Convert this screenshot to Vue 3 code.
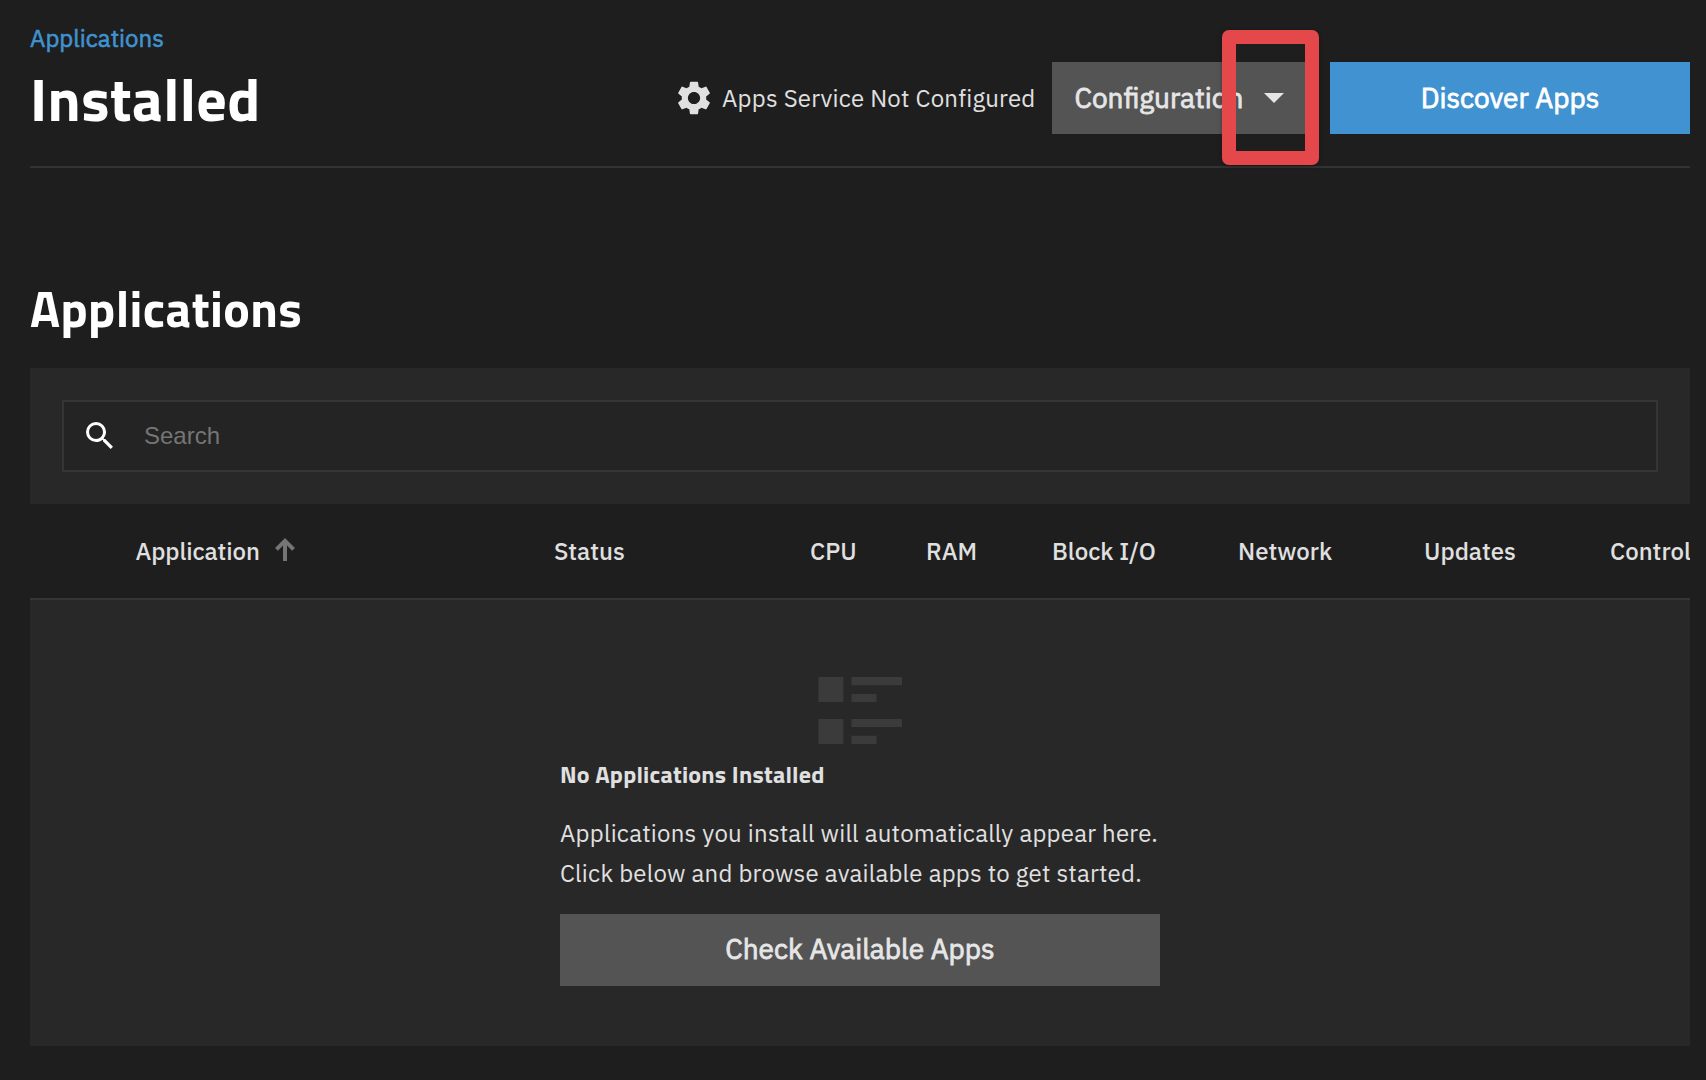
<script setup>
const columns = [
  { label: 'Application', key: 'app', sorted: true },
  { label: 'Status', key: 'status' },
  { label: 'CPU', key: 'cpu' },
  { label: 'RAM', key: 'ram' },
  { label: 'Block I/O', key: 'io' },
  { label: 'Network', key: 'network' },
  { label: 'Updates', key: 'updates' },
  { label: 'Controls', key: 'controls' },
]
</script>

<template>
  <main class="page">
    <header class="page-header">
      <div class="titles">
        <a class="breadcrumb">Applications</a>
        <h1>Installed</h1>
      </div>
      <div class="actions">
        <svg class="gear" viewBox="2 2 20 20" aria-hidden="true">
          <path d="M19.14 12.94c.04-.3.06-.61.06-.94 0-.32-.02-.64-.07-.94l2.03-1.58c.18-.14.23-.41.12-.61l-1.92-3.32c-.12-.22-.37-.29-.59-.22l-2.39.96c-.5-.38-1.03-.7-1.62-.94l-.36-2.54c-.04-.24-.24-.41-.48-.41h-3.84c-.24 0-.43.17-.47.41l-.36 2.54c-.59.24-1.13.57-1.62.94l-2.39-.96c-.22-.08-.47 0-.59.22L2.74 8.87c-.12.21-.08.47.12.61l2.03 1.58c-.05.3-.09.63-.09.94s.02.64.07.94l-2.03 1.58c-.18.14-.23.41-.12.61l1.92 3.32c.12.22.37.29.59.22l2.39-.96c.5.38 1.03.7 1.62.94l.36 2.54c.05.24.24.41.48.41h3.84c.24 0 .44-.17.47-.41l.36-2.54c.59-.24 1.13-.56 1.62-.94l2.39.96c.22.08.47 0 .59-.22l1.92-3.32c.12-.22.07-.47-.12-.61l-2.01-1.58zM12 15.6c-1.98 0-3.6-1.62-3.6-3.6s1.62-3.6 3.6-3.6 3.6 1.62 3.6 3.6-1.62 3.6-3.6 3.6z" />
        </svg>
        <span class="service">Apps Service Not Configured</span>
        <button class="btn config">
          <span>Configuration</span>
          <svg class="caret" viewBox="0 0 20 10" aria-hidden="true"><path d="M0 0h20L10 10z" /></svg>
          <i class="highlight"></i>
        </button>
        <button class="btn primary">Discover Apps</button>
      </div>
    </header>

    <h2>Applications</h2>

    <section class="search-card">
      <label class="search">
        <svg viewBox="3 3 17.5 17.5" aria-hidden="true">
          <path d="M15.5 14h-.79l-.28-.27A6.471 6.471 0 0 0 16 9.5 6.5 6.5 0 1 0 9.5 16c1.61 0 3.09-.59 4.23-1.57l.27.28v.79l5 4.99L20.49 19l-4.99-5zm-6 0C7.01 14 5 11.99 5 9.5S7.01 5 9.5 5 14 7.01 14 9.5 11.99 14 9.5 14z" />
        </svg>
        <span>Search</span>
      </label>
    </section>

    <div class="table-head">
      <div v-for="c in columns" :key="c.key" class="th" :class="c.key">
        {{ c.label }}
        <svg v-if="c.sorted" viewBox="0 0 20 23" aria-hidden="true">
          <path d="M8 23V7.6L2.9 12.7 0 10 10 0l10 10-2.9 2.7L12 7.6V23z" />
        </svg>
      </div>
    </div>

    <section class="empty">
      <svg class="list-icon" viewBox="0 0 84 67" aria-hidden="true">
        <path d="M.4 0h25v25h-25zM33.5 0H84v8.3H33.5zM33.5 17h25v8h-25zM.4 42h25v25h-25zM33.5 42H84v8H33.5zM33.5 58.7h25V67h-25z" />
      </svg>
      <div class="message">
        <h3>No Applications Installed</h3>
        <p>Applications you install will automatically appear here.<br />Click below and browse available apps to get started.</p>
        <button class="btn">Check Available Apps</button>
      </div>
    </section>
  </main>
</template>

<style>
body {
  background: #1e1e1e;
}
</style>

<style scoped>
* {
  box-sizing: border-box;
}

.page {
  height: 1080px;
  padding: 0 16px 0 30px;
  background: #1e1e1e;
  color: #e0e0e0;
  font: 400 24px/40px "IBM Plex Sans", Roboto, sans-serif;
  letter-spacing: 0.22px;
  overflow: hidden;
}

h1, h2, h3, p {
  margin: 0;
}

h1, h2, h3 {
  font-family: "Titillium Web", "IBM Plex Sans", Roboto, sans-serif;
  font-weight: 700;
}

.page-header {
  display: flex;
  justify-content: space-between;
  height: 168px;
  border-bottom: 2px solid #333;
}

.titles {
  padding-top: 18px;
}

.breadcrumb {
  display: block;
  color: #4092d0;
  letter-spacing: 0;
  -webkit-text-stroke: 0.6px currentColor;
}

h1 {
  margin-top: 1px;
  color: #fff;
  font-size: 60px;
  line-height: 80px;
  letter-spacing: 0.4px;
}

.actions {
  display: flex;
  align-items: center;
  align-self: flex-start;
  height: 72px;
  margin-top: 62px;
}

.gear {
  width: 34px;
  height: 34px;
  margin-right: 11px;
  fill: #e0e0e0;
}

.service {
  width: 330px;
  white-space: nowrap;
}

.btn {
  height: 72px;
  padding: 0;
  border: 0;
  background: #545454;
  color: #e6e6e6;
  font: 400 28px/72px "IBM Plex Sans", Roboto, sans-serif;
  letter-spacing: 0;
  -webkit-text-stroke: 0.8px currentColor;
}

.config {
  position: relative;
  display: flex;
  align-items: center;
  width: 258px;
  padding-left: 22.5px;
}

.config span {
  width: 189.5px;
  text-align: left;
}

.caret {
  width: 20px;
  height: 10px;
  fill: #e6e6e6;
}

.highlight {
  position: absolute;
  top: -31.7px;
  left: 170px;
  width: 97px;
  height: 135px;
  border: 14px solid #e4484b;
  border-radius: 7px;
  box-shadow: 0 1px 5px rgba(0, 0, 0, 0.3);
}

.primary {
  width: 360px;
  margin-left: 20px;
  background: #4092d0;
  color: #fff;
}

h2 {
  margin-top: 104px;
  height: 96px;
  color: #fff;
  font-size: 50px;
  line-height: 72px;
  letter-spacing: 0.38px;
}

.search-card {
  height: 136px;
  padding: 32px;
  background: #282828;
}

.search {
  display: flex;
  align-items: center;
  height: 72px;
  padding-left: 22px;
  border: 2px solid #363636;
  background: #242424;
  color: #757575;
  font-family: "Liberation Sans", Arial, sans-serif;
  letter-spacing: 0;
}

.search svg {
  width: 27px;
  height: 27px;
  margin: 0 31px 1px 0;
  fill: #fff;
}

.table-head {
  display: flex;
  height: 96px;
  padding-left: 105.5px;
  border-bottom: 2px solid #363636;
  overflow: hidden;
  font-weight: 500;
  line-height: 95px;
  letter-spacing: 0;
  white-space: nowrap;
}

.th {
  flex: none;
  display: flex;
}

.th svg {
  width: 20px;
  height: 23px;
  margin: 34px 0 0 15px;
  fill: #757575;
}

.app {
  width: 418.5px;
  letter-spacing: -0.1px;
}

.status { width: 256px; }
.cpu { width: 116px; }
.ram { width: 126px; }
.io { width: 186px; }
.network { width: 186px; }
.updates { width: 186px; }

.empty {
  display: flex;
  flex-direction: column;
  align-items: center;
  height: 446px;
  padding-top: 77px;
  background: #282828;
}

.list-icon {
  width: 84px;
  height: 67px;
  fill: #3b3b3b;
}

.message {
  width: 600px;
}

h3 {
  margin-top: 10px;
  font-size: 24px;
  line-height: 40px;
}

p {
  margin: 19px 0 21px;
  white-space: nowrap;
}

.message .btn {
  display: block;
  width: 600px;
  line-height: 70px;
  padding-bottom: 2px;
}
</style>
